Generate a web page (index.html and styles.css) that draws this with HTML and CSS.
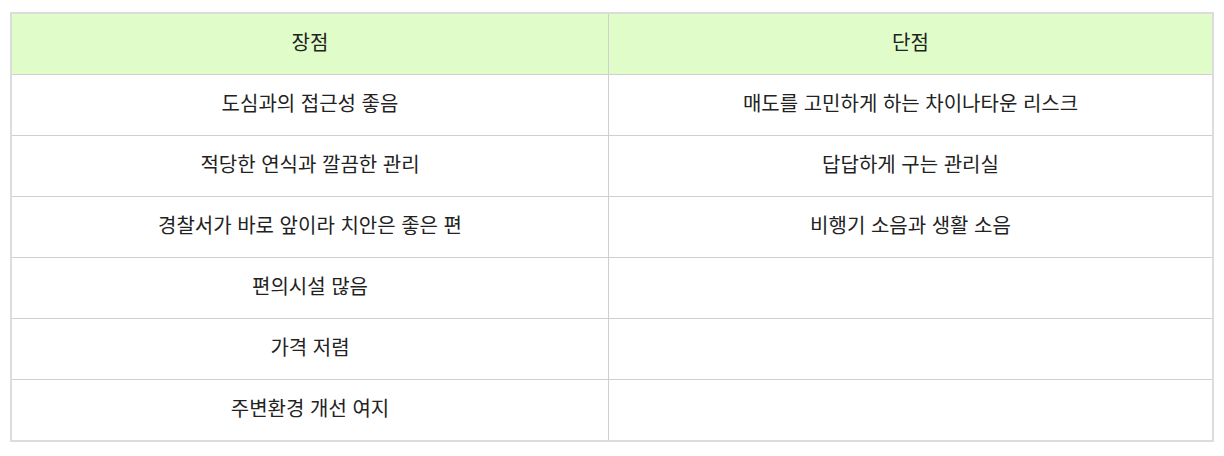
FILE: index.html
```html
<!DOCTYPE html>
<html lang="ko">
<head>
<meta charset="utf-8">
<link rel="stylesheet" href="styles.css">
</head>
<body>
<div class="wrap">
<table class="pc-table">
  <thead>
    <tr><th class="col-pro">장점</th><th class="col-con">단점</th></tr>
  </thead>
  <tbody>
    <tr><td>도심과의 접근성 좋음</td><td>매도를 고민하게 하는 차이나타운 리스크</td></tr>
    <tr><td>적당한 연식과 깔끔한 관리</td><td>답답하게 구는 관리실</td></tr>
    <tr><td>경찰서가 바로 앞이라 치안은 좋은 편</td><td>비행기 소음과 생활 소음</td></tr>
    <tr><td>편의시설 많음</td><td></td></tr>
    <tr><td>가격 저렴</td><td></td></tr>
    <tr><td>주변환경 개선 여지</td><td></td></tr>
  </tbody>
</table>
</div>
</body>
</html>
```
FILE: styles.css
```css
html, body { margin: 0; padding: 0; background: #fff; }
.wrap { padding: 12px 10px 0 10px; }
.pc-table {
  width: 1204px;
  border-collapse: collapse;
  border: 2px solid #dcdcdc;
  font-family: "Noto Sans CJK KR", "Noto Sans", sans-serif;
  font-size: 20px;
  color: #222;
  table-layout: fixed;
}
.pc-table th, .pc-table td {
  border: 1px solid #cfcfcf;
  height: 56px;
  padding: 0 10px 4px;
  text-align: center;
  vertical-align: middle;
  font-weight: 400;
  line-height: 1.2;
}
.pc-table thead th { background: #e0fcc8; }
.col-pro { width: 576px; }
```
